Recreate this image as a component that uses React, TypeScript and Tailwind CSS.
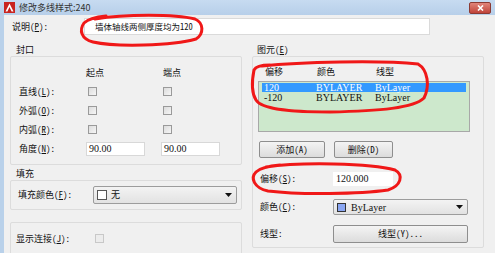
const cjk = "font-['Noto_Sans_Mono_CJK_SC','Noto_Sans_CJK_SC',monospace]";
const serif = "font-['Liberation_Serif','Noto_Sans_CJK_SC',serif]";

const Check = ({ dim = false }: { dim?: boolean }) => (
  <span
    className={`block w-[9px] h-[9px] border ${
      dim ? "border-[#c8c8c8] bg-[#ececec]" : "border-[#9a9a9a] bg-gradient-to-br from-[#dcdcdc] to-[#f6f6f6]"
    }`}
  />
);

const Arrow = () => (
  <svg width="7" height="4" viewBox="0 0 7 4" className="shrink-0">
    <path d="M0 0h7L3.5 4z" fill="#111" />
  </svg>
);

const Button = ({ label, className = "" }: { label: string; className?: string }) => (
  <div
    className={`flex items-center justify-center border border-[#8e8e8e] rounded-[2px] bg-gradient-to-b from-[#f4f4f4] to-[#dcdcdc] text-[9px] text-[#111] ${className}`}
  >
    {label}
  </div>
);

export default function App() {
  return (
    <div className={`relative w-[495px] h-[253px] overflow-hidden flex flex-col bg-[#f0f0f0] text-[#111] text-[9px] ${cjk}`}>
      {/* title bar */}
      <div className="h-[15px] flex items-center bg-gradient-to-b from-[#c7dbf1] to-[#b7cfe9] pl-[4px] pr-[4px]">
        <svg width="11" height="11" viewBox="0 0 11 11">
          <rect width="11" height="11" fill="#c9241f" />
          <path d="M5.5 1.5L9.5 9.5H7.6L5.5 5L3.4 9.5H1.5z" fill="#fff" />
        </svg>
        <span className="ml-[4px] text-[9px] leading-[15px] h-[15px] text-[#333] font-['Noto_Sans_CJK_SC',sans-serif]">修改多线样式:240</span>
        <div className="ml-auto mt-[1px] w-[22px] h-[12px] rounded-[2px] border border-[#8b3a33] bg-gradient-to-b from-[#e0847a] to-[#c0433a] flex items-center justify-center">
          <svg width="7" height="6" viewBox="0 0 7 6">
            <path d="M1 0.5L6 5.5M6 0.5L1 5.5" stroke="#fff" strokeWidth="1.6" />
          </svg>
        </div>
      </div>

      <div className="flex flex-1">
        <div className="w-[4px] bg-[#b9d1ea]" />
        <div className="flex-1 flex flex-col">
          {/* description */}
          <div className="flex items-center h-[17px] mt-[3px]">
            <span className="w-[80px] pl-[8px]">说明(<u>P</u>):</span>
            <div className="w-[346px] h-[17px] bg-white border border-[#dadada] flex items-center pl-[10px] text-[8.5px] text-[#111]">
              墙体轴线两侧厚度均为120
            </div>
          </div>

          <div className="flex mt-[9px] pl-[6px] gap-[10px]">
            {/* left column */}
            <div className="w-[232px] flex flex-col">
              <span className="h-[12px] leading-[12px] pl-[6px]">封口</span>
              <div className="h-[109px] border border-[#dcdcdc] rounded-[2px] pt-[7px]">
                <div className="grid grid-cols-[75px_75px_1fr]">
                  <span className="h-[18px] leading-[18px]" />
                  <span className="h-[18px] leading-[18px]">起点</span>
                  <span className="h-[18px] leading-[18px] pl-[2px]">端点</span>

                  <span className="h-[19px] flex items-center pl-[8px]">直线(<u>L</u>):</span>
                  <span className="h-[19px] flex items-center pl-[2px]"><Check /></span>
                  <span className="h-[19px] flex items-center pl-[2px]"><Check /></span>

                  <span className="h-[19px] flex items-center pl-[8px]">外弧(<u>O</u>):</span>
                  <span className="h-[19px] flex items-center pl-[2px]"><Check /></span>
                  <span className="h-[19px] flex items-center pl-[2px]"><Check /></span>

                  <span className="h-[19px] flex items-center pl-[8px]">内弧(<u>R</u>):</span>
                  <span className="h-[19px] flex items-center pl-[2px]"><Check /></span>
                  <span className="h-[19px] flex items-center pl-[2px]"><Check /></span>

                  <span className="h-[19px] flex items-center pl-[8px]">角度(<u>N</u>):</span>
                  <span className="h-[19px] flex items-center">
                    <span className={`w-[59px] h-[14px] bg-white border border-[#d8d8d8] pl-[2px] text-[10px] leading-[12px] ${serif}`}>90.00</span>
                  </span>
                  <span className="h-[19px] flex items-center">
                    <span className={`w-[59px] h-[14px] bg-white border border-[#d8d8d8] pl-[2px] text-[10px] leading-[12px] ${serif}`}>90.00</span>
                  </span>
                </div>
              </div>

              <span className="h-[12px] leading-[12px] pl-[6px] mt-[3px]">填充</span>
              <div className="h-[30px] border border-[#dcdcdc] rounded-[2px] flex items-center">
                <span className="w-[82px] pl-[7px]">填充颜色(<u>F</u>):</span>
                <div className="w-[144px] h-[18px] border border-[#9c9c9c] rounded-[2px] bg-gradient-to-b from-[#f3f3f3] to-[#e2e2e2] flex items-center pl-[3px] pr-[4px]">
                  <span className="w-[10px] h-[10px] border border-[#555] bg-white" />
                  <span className="ml-[4px]">无</span>
                  <span className="ml-auto"><Arrow /></span>
                </div>
              </div>

              <div className="mt-[12px] h-[40px] border border-[#dcdcdc] rounded-[2px] flex pt-[8px]">
                <span className="w-[84px] pl-[5px] h-[15px] leading-[15px]">显示连接(<u>J</u>):</span>
                <span className="mt-[3px]"><Check dim /></span>
              </div>
            </div>

            {/* right column */}
            <div className="w-[232px] flex flex-col">
              <span className="h-[12px] leading-[12px] pl-[5px]">图元(<u>E</u>)</span>
              <div className="h-[192px] border border-[#dcdcdc] rounded-[2px] pt-[8px] pl-[5px] flex flex-col">
                <div className="flex h-[14px] items-center pl-[7px]">
                  <span className="w-[52px]">偏移</span>
                  <span className="w-[59px]">颜色</span>
                  <span>线型</span>
                </div>
                <div className="mt-[2px] w-[212px] h-[51px] border border-[#a8a8a8] bg-[#cde8cc] pt-[1px] px-[3px]">
                  <div className={`flex h-[9px] items-center bg-[#3399ff] text-white text-[10px] pl-[2px] ${serif}`}>
                    <span className="w-[52px]">120</span>
                    <span className="w-[59px]">BYLAYER</span>
                    <span>ByLayer</span>
                  </div>
                  <div className={`flex h-[10px] items-center text-[10px] pl-[2px] ${serif}`}>
                    <span className="w-[52px]">-120</span>
                    <span className="w-[59px]">BYLAYER</span>
                    <span>ByLayer</span>
                  </div>
                </div>
                <div className="flex mt-[9px] gap-[9px] pl-[1px]">
                  <Button label="添加(A)" className="w-[66px] h-[17px]" />
                  <Button label="删除(D)" className="w-[59px] h-[17px]" />
                </div>
                <div className="flex items-center mt-[14px] h-[14px]">
                  <span className="w-[75px] pl-[2px]">偏移(<u>S</u>):</span>
                  <span className={`w-[60px] h-[14px] bg-white pl-[3px] text-[10px] leading-[14px] ${serif}`}>120.000</span>
                </div>
                <div className="flex items-center mt-[13px] h-[16px]">
                  <span className="w-[75px] pl-[2px]">颜色(<u>C</u>):</span>
                  <div className="w-[135px] h-[16px] border border-[#9c9c9c] rounded-[2px] bg-gradient-to-b from-[#f3f3f3] to-[#e2e2e2] flex items-center pl-[3px] pr-[4px]">
                    <span className="w-[9px] h-[9px] border border-[#333] bg-[#8aa6f2]" />
                    <span className={`ml-[5px] text-[10px] ${serif}`}>ByLayer</span>
                    <span className="ml-auto"><Arrow /></span>
                  </div>
                </div>
                <div className="flex items-center mt-[10px] h-[18px]">
                  <span className="w-[75px] pl-[2px]">线型:</span>
                  <Button label="线型(Y)..." className="w-[135px] h-[18px]" />
                </div>
              </div>
            </div>
          </div>
        </div>
      </div>

      {/* red hand-drawn annotations */}
      <svg className="absolute inset-0 pointer-events-none" width="495" height="253" viewBox="0 0 495 253">
        <g fill="none" stroke="#f01818" strokeWidth="3" strokeLinecap="round">
          <path d="M95 19C125 14 175 14 195 19C204 23 204 34 196 39C172 46 115 47 93 42C81 39 79 30 84 23C88 19 96 17 106 16" />
          <path d="M262 66C300 62 380 60 418 64C428 70 430 86 424 98C414 108 380 111 330 112C295 112 262 110 256 100C251 92 252 80 254 70C256 66 262 65 270 65" />
          <path d="M266 167C300 162 370 163 395 170C404 175 401 186 388 190C360 194 300 195 268 191C254 188 250 178 256 172C260 168 268 166 280 165" />
        </g>
      </svg>
    </div>
  );
}
